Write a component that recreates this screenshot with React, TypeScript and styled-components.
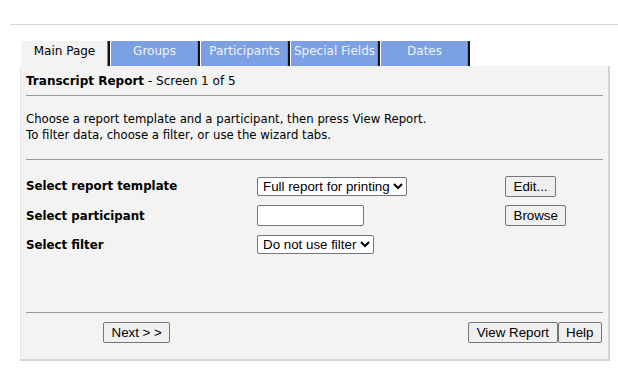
import styled, { createGlobalStyle } from "styled-components";

const GlobalStyle = createGlobalStyle`
  body {
    margin: 0;
    background: #fff;
    font-family: "DejaVu Sans", Verdana, sans-serif;
  }
`;

const Page = styled.div`
  padding-top: 24px;
  width: 618px;
`;

const TopRule = styled.div`
  margin-left: 10px;
  height: 1px;
  background: #d6d6d6;
`;

const Wizard = styled.div`
  margin: 16px 0 0 20px;
  width: 590px;
`;

const TabBar = styled.div`
  display: flex;
  height: 25px;
`;

const Tab = styled.div<{ $active?: boolean }>`
  box-sizing: border-box;
  width: 90px;
  height: 25px;
  display: flex;
  justify-content: center;
  padding-top: 3px;
  font-size: 12px;
  color: ${(p) => (p.$active ? "#000" : "#eef2fb")};
  background: ${(p) => (p.$active ? "#f3f3f3" : "#7ba0e3")};
  border-left: 1px solid #fff;
  border-right: 2px solid #111;
  border-top-left-radius: 2px;
  box-shadow: inset -1px 0 0 #888;
`;

const Panel = styled.div`
  box-sizing: border-box;
  height: 295px;
  background: #f3f3f3;
  border-left: 1px solid #e6e6e6;
  border-right: 2px solid #d4d4d4;
  border-bottom: 2px solid #d4d4d4;
  padding: 0 5px 0 5px;
  display: flex;
  flex-direction: column;
`;

const Title = styled.div`
  font-size: 12px;
  padding: 8px 0 7px;
  & b {
    font-weight: bold;
  }
`;

const Rule = styled.hr`
  margin: 0;
  border: none;
  height: 1px;
  background: #999;
`;

const Intro = styled.p`
  margin: 0;
  padding: 15px 0 16px;
  font-size: 11.7px;
  line-height: 16px;
`;

const Form = styled.div`
  display: grid;
  grid-template-columns: 231px 248px auto;
  grid-template-rows: 30px 29px 29px;
  align-items: center;
  padding-top: 11px;
  flex: 1;
  align-content: start;
`;

const Label = styled.div`
  font-size: 11.8px;
  font-weight: bold;
`;

const Select = styled.select`
  justify-self: start;
  font-family: "Liberation Sans", Arial, sans-serif;
  font-size: 13.33px;
  height: 19px;
  padding: 0 0 0 1px;
  border: 1px solid #767676;
  border-radius: 2px;
  background: #fff;
  color: #000;
`;

const TextInput = styled.input`
  justify-self: start;
  box-sizing: border-box;
  width: 107px;
  height: 21px;
  border: 1px solid #767676;
  border-radius: 2px;
  background: #fff;
`;

const Button = styled.button`
  justify-self: start;
  font-family: "Liberation Sans", Arial, sans-serif;
  font-size: 13.33px;
  height: 21px;
  padding: 0 7.5px;
  border: 1px solid #767676;
  border-radius: 2px;
  background: #efefef;
  color: #000;
`;

const Footer = styled.div`
  display: flex;
  align-items: center;
  padding: 9px 1px 16px 77px;
`;

const Spacer = styled.div`
  flex: 1;
`;

const tabs = ["Main Page", "Groups", "Participants", "Special Fields", "Dates"];

export default function App() {
  return (
    <Page>
      <GlobalStyle />
      <TopRule />
      <Wizard>
        <TabBar>
          {tabs.map((t, i) => (
            <Tab key={t} $active={i === 0}>
              {t}
            </Tab>
          ))}
        </TabBar>
        <Panel>
          <Title>
            <b>Transcript Report</b> - Screen 1 of 5
          </Title>
          <Rule />
          <Intro>
            Choose a report template and a participant, then press View Report.
            <br />
            To filter data, choose a filter, or use the wizard tabs.
          </Intro>
          <Rule />
          <Form>
            <Label>Select report template</Label>
            <Select defaultValue="full">
              <option value="full">Full report for printing</option>
            </Select>
            <Button>Edit...</Button>
            <Label>Select participant</Label>
            <TextInput type="text" />
            <Button>Browse</Button>
            <Label>Select filter</Label>
            <Select defaultValue="none">
              <option value="none">Do not use filter</option>
            </Select>
            <span />
          </Form>
          <Rule />
          <Footer>
            <Button>Next &gt; &gt;</Button>
            <Spacer />
            <Button>View Report</Button>
            <Button>Help</Button>
          </Footer>
        </Panel>
      </Wizard>
    </Page>
  );
}
